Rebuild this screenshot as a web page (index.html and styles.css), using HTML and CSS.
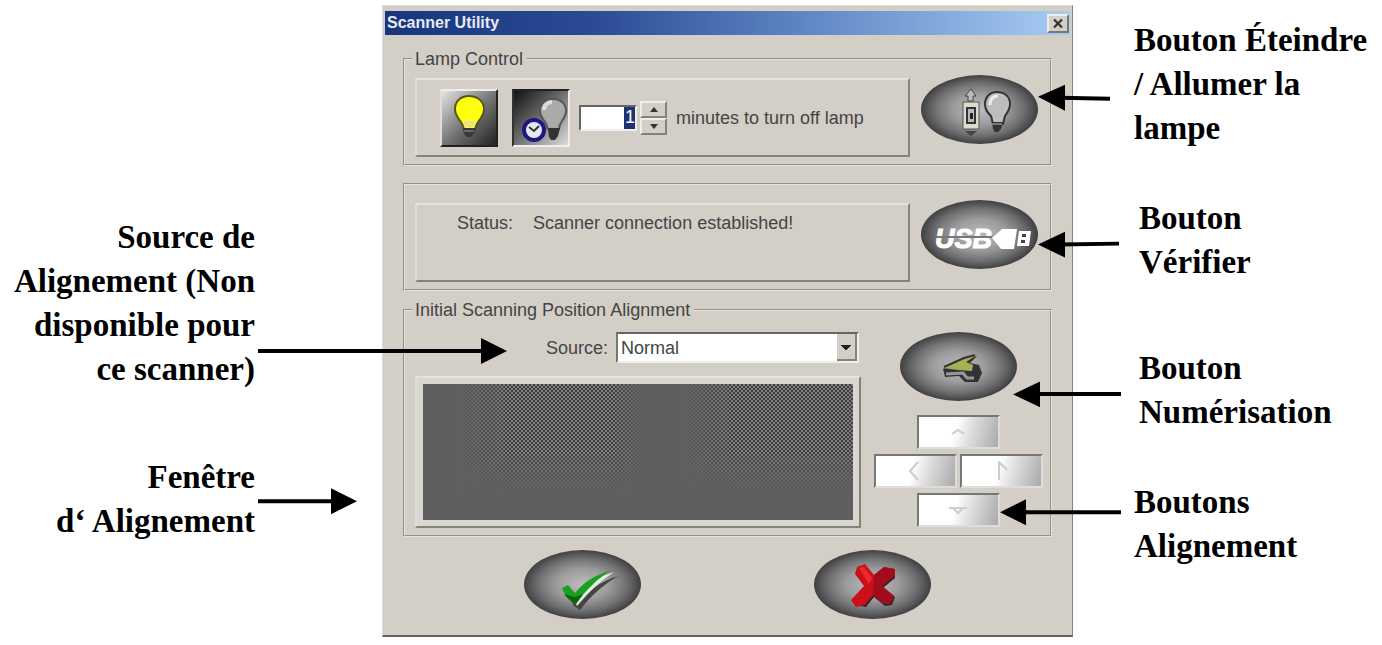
FILE: index.html
```html
<!DOCTYPE html>
<html lang="fr">
<head>
    <meta charset="UTF-8">
    <meta name="viewport" content="width=device-width, initial-scale=1.0">
    <title>Scanner Utility</title>
    <link rel="stylesheet" href="styles.css">
</head>
<body>
<div class="figure">
    <div class="notes notes-left">
        <p class="note">Source de<br>Alignement (Non<br>disponible pour<br>ce scanner)</p>
        <p class="note">Fenêtre<br>d‘ Alignement</p>
    </div>

    <form class="dialog" lang="en">
        <div class="titlebar">
            <span>Scanner Utility</span>
            <button type="button" class="close" aria-label="Close">
                <svg width="10" height="9" viewBox="0 0 10 9"><path d="M1 0.5L9 8.5M9 0.5L1 8.5" stroke="#333" stroke-width="2.2"/></svg>
            </button>
        </div>

        <fieldset class="group">
            <legend>Lamp Control</legend>
            <div class="row">
                <div class="panel lamp">
                    <div class="bulbs">
                        <button type="button" class="bulb" aria-label="Lamp on">
                            <svg width="54" height="54" viewBox="0 2 54 54">
                                <path d="M27 7c-9 0-14 6-14 13 0 6 3 9 6 13 2 3 2 5 3 7h11c1-2 1-4 3-7 3-4 6-7 6-13 0-7-6-13-15-13z" fill="#ffff10" stroke="#55551a" stroke-width="2"/>
                                <path d="M22 32h11v6H22z" fill="#e8e28a"/>
                                <path d="M21 39h13l-2 6-3 3h-4l-3-3z" fill="#383838"/>
                                <path d="M22 42h10" stroke="#999" stroke-width="1"/>
                            </svg>
                        </button>
                        <button type="button" class="bulb pressed" aria-label="Lamp timer">
                            <svg width="54" height="54" viewBox="0 3 54 54">
                                <path d="M39 11c-8 0-13 5-13 12 0 5 3 8 5 11 2 3 2 5 3 7h11c0-3 1-5 3-8 2-3 4-6 4-10 0-7-5-12-13-12z" fill="#aaa" stroke="#555" stroke-width="2"/>
                                <path d="M30 22c0-5 4-8 8-8" stroke="#ddd" stroke-width="4" fill="none"/>
                                <path d="M34 40h12l-2 8-3 4h-4l-2-3z" fill="#333"/>
                                <circle cx="20" cy="42" r="10" fill="#e8e8f4" stroke="#1c1a80" stroke-width="4"/>
                                <path d="M15 39l5 4 5-5" stroke="#333" stroke-width="2" fill="none"/>
                            </svg>
                        </button>
                    </div>
                    <div class="spin">
                        <input id="minutes" type="text" value="1">
                        <div class="steps">
                            <button type="button" aria-label="More"><svg width="8" height="5" viewBox="0 0 8 5"><path d="M4 0l4 5H0z" fill="#333"/></svg></button>
                            <button type="button" aria-label="Less"><svg width="8" height="5" viewBox="0 0 8 5"><path d="M0 0h8L4 5z" fill="#333"/></svg></button>
                        </div>
                    </div>
                    <label for="minutes">minutes to turn off lamp</label>
                </div>
                <button type="button" class="oval" aria-label="Turn lamp on or off">
                    <svg width="117" height="69" viewBox="0 0 117 69">
                        <path d="M50 14l5 7h-3v5h-5v-5h-3z" fill="#bbb" stroke="#444"/>
                        <path d="M42 27h16v27H42z" fill="#dcdccb" stroke="#555"/>
                        <path d="M46 33h8v15h-8z" fill="#bbb" stroke="#333" stroke-width="2"/>
                        <path d="M49 38h3v6h-3z" fill="#222"/>
                        <path d="M44 56h12l-6 5z" fill="#444"/>
                        <path d="M76 17c-8 0-12 6-12 12 0 6 3 9 6 12l2 8h10l2-8c3-4 5-7 5-12 0-7-5-12-13-12z" fill="#bdbdbd" stroke="#333" stroke-width="2"/>
                        <path d="M69 30c0-6 3-9 8-9" stroke="#eee" stroke-width="3" fill="none"/>
                        <path d="M71 47h11l-2 7-3 3h-3l-2-3z" fill="#333"/>
                        <path d="M71 49h10" stroke="#bbb"/>
                    </svg>
                </button>
            </div>
        </fieldset>

        <fieldset class="group plain">
            <div class="row">
                <div class="panel status">
                    <span>Status:</span>
                    <output>Scanner connection established!</output>
                </div>
                <button type="button" class="oval" aria-label="Check connection">
                    <svg width="117" height="69" viewBox="0 0 117 69">
                        <text class="usb" x="14" y="48">USB</text>
                        <path d="M14 37h57" stroke="#77777a" stroke-width="2"/>
                        <path d="M71 38l10-9h15l-3 20H80z" fill="#fff"/>
                        <path d="M98 31h12l-2 15H96z" fill="#fff"/>
                        <path d="M101 34h4v3h-4zM100 40h4v3h-4z" fill="#444"/>
                    </svg>
                </button>
            </div>
        </fieldset>

        <fieldset class="group align">
            <legend>Initial Scanning Position Alignment</legend>
            <div class="row">
                <div class="align-main">
                    <div class="source">
                        <label for="source">Source:</label>
                        <select id="source"><option>Normal</option></select>
                    </div>
                    <div class="panel preview"><div class="screen"></div></div>
                </div>
                <div class="align-side">
                    <button type="button" class="oval" aria-label="Scan">
                        <svg width="117" height="69" viewBox="0 0 117 69">
                            <path d="M43 37l22-10 12-3-7 7 9 2 3 8-4 9H65l-6-6-14 1z" fill="#333"/>
                            <path d="M43 36l20-9 12-3-9 6 7 3-1 6-14-1z" fill="#a7b054"/>
                            <path d="M44 35l20-9 11-3" stroke="#333" stroke-width="2" fill="none"/>
                            <path d="M46 42l17-1 4 5h7" stroke="#999" stroke-width="3" fill="none"/>
                        </svg>
                    </button>
                    <div class="pad">
                        <button type="button" class="up" aria-label="Up" disabled><svg width="20" height="20" viewBox="0 0 20 20"><path d="M4 12l6-4 6 4"/></svg></button>
                        <button type="button" class="left" aria-label="Left" disabled><svg width="20" height="20" viewBox="0 0 20 20"><path d="M13 1L5 10l8 9"/></svg></button>
                        <button type="button" class="right" aria-label="Right" disabled><svg width="20" height="20" viewBox="0 0 20 20"><path d="M8 19V1l8 8"/></svg></button>
                        <button type="button" class="down" aria-label="Down" disabled><svg width="20" height="20" viewBox="0 0 20 20"><path d="M1 8h18M5 8l5 5 5-5"/></svg></button>
                    </div>
                </div>
            </div>
        </fieldset>

        <div class="actions">
            <button type="submit" class="oval" aria-label="OK">
                <svg width="117" height="69" viewBox="0 0 117 69">
                    <path d="M41 41l12 14C64 40 76 32 94 26 76 37 67 46 56 60l-6-4z" fill="#444"/>
                    <path d="M46 40l7 7C62 34 72 28 90 22 75 32 65 42 53 56z" fill="#e4efe4"/>
                    <path d="M38 38l6-3 7 8C61 31 70 26 87 20 73 29 62 40 52 54 46 52 41 46 38 38z" fill="#18a01e"/>
                    <path d="M40 44c4 5 8 8 12 10l7-10-8 3z" fill="#0c6612"/>
                </svg>
            </button>
            <button type="button" class="oval" aria-label="Cancel">
                <svg width="117" height="69" viewBox="0 0 117 69">
                    <path d="M46 18l8 1 7 10 10-9 10 3v5L69 38l12 9-3 8-7 1-11-9-8 10-11-2-2-6 12-13-8-12z" fill="#3a2222"/>
                    <path d="M43 17l8-3 9 11 10-8 11 2v7L68 36l12 10-3 7-7 1-11-9-8 10-9 2-5-7 13-14-9-12z" fill="#cc1018"/>
                    <path d="M60 25l10-8 11 2v7L68 36l12 10-3 7-7 1-11-9z" fill="#a00c1c"/>
                    <path d="M45 18l5-1 8 11-3 6z" fill="#ef2830"/>
                </svg>
            </button>
        </div>
    </form>

    <div class="notes notes-right">
        <p class="note">Bouton Éteindre<br>/ Allumer la<br>lampe</p>
        <p class="note inset">Bouton<br>Vérifier</p>
        <p class="note inset">Bouton<br>Numérisation</p>
        <p class="note">Boutons<br>Alignement</p>
    </div>

    <!-- arrows from the notes to the controls -->
    <svg class="arrows" viewBox="0 0 1382 645" preserveAspectRatio="none" aria-hidden="true">
        <path d="M1110 99L1060 98M1119 244L1060 245M1121 394.5H1036M1121 513H1022M258 351.5H485M258 502H335"/>
        <path class="heads" d="M1038 97l27-12v26zM1038 245l27-13v26zM1013 395l27-13v26zM1000 513l26-13v26zM507 351.500l-26-13v26zM357 502l-26-13v26z"/>
    </svg>
</div>
</body>
</html>
```
FILE: styles.css
```css
* {
    box-sizing: border-box;
}
body {
    margin: 0;
    background: #fff;
}
.figure {
    position: relative;
    display: grid;
    grid-template-columns: 382fr 691fr 309fr;
    align-items: start;
    padding-bottom: 7px;
}

/* notes */
.notes {
    display: flex;
    flex-direction: column;
    font: bold 33px/44px "Liberation Serif", "Times New Roman", serif;
    color: #000;
    white-space: nowrap;
}
.note {
    margin: 0;
}
.notes-left {
    gap: 64px;
    padding: 215px 127px 0 0;
    text-align: right;
}
.notes-right {
    gap: 46px;
    padding: 18px 0 0 61px;
}
.inset {
    padding-left: 5px;
}
.inset + .inset {
    margin-top: 16px;
}
.arrows {
    position: absolute;
    inset: 0;
    width: 100%;
    height: 100%;
    pointer-events: none;
    fill: none;
    stroke: #000;
    stroke-width: 4;
}
.heads {
    fill: #000;
    stroke: none;
}

/* dialog */
.dialog {
    margin-top: 5px;
    padding: 5px 0 16px;
    border: 1px solid #dedbd6;
    border-right-color: #85827d;
    border-bottom: 2px solid #66635f;
    background: #d3cfc7;
    font: 18px/22px "Liberation Sans", Arial, sans-serif;
    color: #444;
}
.dialog button,
.dialog input,
.dialog select {
    margin: 0;
    padding: 0;
    font: inherit;
    color: inherit;
}
.dialog svg {
    display: block;
}
.titlebar {
    display: flex;
    align-items: center;
    justify-content: space-between;
    height: 24px;
    margin: 0 2px 13px;
    padding: 0 1px 0 2px;
    background: linear-gradient(90deg, #17367c, #2a4a94 30%, #5c84c4 60%, #a8ccf2);
    font-size: 16px;
    font-weight: bold;
    color: #e6ebf5;
}
.close {
    display: grid;
    place-items: center;
    width: 22px;
    height: 19px;
    border: 2px solid;
    border-color: #eee #77777a #77777a #eee;
    background: #d3cfc7;
}
.group {
    margin: 0 20px;
    min-width: 0;
    padding: 5px 12px 7px 10px;
    border: 2px groove #e6e2dc;
}
.group legend {
    padding: 0 4px 0 3px;
    margin-left: -3px;
}
.plain {
    margin-top: 17px;
    margin-bottom: 8px;
    padding-top: 15px;
}
.align {
    padding: 11px 6px 7px 10px;
}
.row {
    display: flex;
    gap: 11px;
    align-items: flex-start;
}
.panel {
    flex: 1;
    border: 2px solid;
    border-color: #e6e3de #858279 #858279 #e0ddd8;
}
.lamp,
.status {
    height: 79px;
    margin-top: 3px;
}
.lamp {
    display: flex;
    align-items: center;
    gap: 9px;
    padding-left: 23px;
    white-space: nowrap;
}
.bulbs {
    display: flex;
    gap: 14px;
}
.bulb {
    width: 58px;
    height: 58px;
    border: 2px solid;
    border-color: #eee #222 #222 #ddd;
    background: linear-gradient(135deg, #e4e4e4, #777 50%, #222);
}
.pressed {
    border-color: #222 #eee #eee #333;
    background: linear-gradient(135deg, #111, #666 45%, #ddd);
}
.spin {
    display: flex;
    align-items: center;
    gap: 3px;
}
.spin input {
    width: 58px;
    height: 26px;
    border: 2px solid;
    border-color: #666 #eee #eee #666;
    border-radius: 0;
    background: linear-gradient(#1c3474, #1c3474) right / 11px no-repeat #fff;
    color: #fff;
    text-align: right;
}
.steps {
    width: 27px;
}
.steps button {
    display: grid;
    place-items: center;
    width: 100%;
    height: 17px;
    border: 2px solid;
    border-color: #eee #85827d #85827d #eee;
    background: #d3cfc7;
}
.status {
    display: flex;
    gap: 20px;
    padding: 7px 0 0 40px;
}
.oval {
    flex: none;
    width: 117px;
    height: 69px;
    border: 0;
    border-radius: 50%;
    background: radial-gradient(closest-side, #bcbcc0, #9c9c9e 45%, #717173 75%, #404042);
}
.usb {
    font: italic bold 27px "Liberation Sans", sans-serif;
    fill: #fff;
    stroke: #fff;
    stroke-width: 1;
}

/* alignment */
.align-main {
    flex: 1;
}
.source {
    display: flex;
    align-items: center;
    justify-content: flex-end;
    gap: 8px;
    margin-bottom: 13px;
    padding-right: 2px;
}
.dialog select {
    width: 243px;
    height: 31px;
    padding-left: 3px;
    border: 2px solid;
    border-color: #666 #eee #eee #777;
    border-radius: 0;
    appearance: none;
    background:
        conic-gradient(from -45deg at 50% 100%, #222 90deg, transparent 0) right 6px top 11px / 10px 5px no-repeat,
        linear-gradient(#85827d, #85827d) right bottom / 20px 2px no-repeat,
        linear-gradient(#85827d, #85827d) right / 2px no-repeat,
        linear-gradient(#d3cfc7, #d3cfc7) right / 20px no-repeat,
        #fff;
}
.preview {
    padding: 6px;
    background: #dad7d2;
}
.screen {
    height: 136px;
    background:
        linear-gradient(transparent 50%, #5f5f5f 78%),
        linear-gradient(90deg, #5f5f5f 8%, transparent 20% 44%, #5f5f5f 52% 60%, transparent 72%),
        repeating-conic-gradient(#404040 0 25%, #7e7e7e 0 50%) 0 0 / 4px 4px;
}
.align-side {
    display: flex;
    flex-direction: column;
    align-items: center;
    gap: 14px;
}
.pad {
    display: grid;
    grid-template-columns: repeat(4, 43px);
    grid-template-areas:
        ". up up ."
        "left left right right"
        ". down down .";
    gap: 5px 0;
}
.pad button {
    display: grid;
    place-items: center;
    width: 83px;
    height: 34px;
    justify-self: center;
    border: 2px solid;
    border-color: #777 #ddd #ddd #777;
    background: linear-gradient(105deg, #fff 45%, #ddd 65%, #aaa);
}
.pad svg {
    fill: none;
    stroke: #ccc;
    stroke-width: 2;
}
.up { grid-area: up; }
.left { grid-area: left; }
.right { grid-area: right; }
.down { grid-area: down; }

.actions {
    display: flex;
    justify-content: center;
    gap: 173px;
    margin-top: 13px;
}
```
